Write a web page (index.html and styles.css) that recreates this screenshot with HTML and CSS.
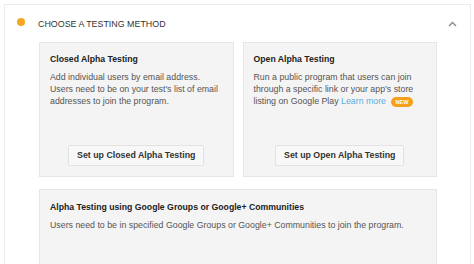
FILE: index.html
```html
<!DOCTYPE html>
<html>
<head>
<meta charset="utf-8">
<link rel="stylesheet" href="styles.css">
</head>
<body>
<section class="panel">
  <header class="panel-head">
    <span class="dot"></span>
    <h2 class="panel-title">CHOOSE A TESTING METHOD</h2>
    <svg class="chevron" width="9" height="6" viewBox="0 0 9 6"><path d="M1 5 L4.5 1.5 L8 5" fill="none" stroke="#8a8a8a" stroke-width="1.4"/></svg>
  </header>
  <div class="methods">
    <div class="row">
      <div class="card">
        <h3 class="card-title">Closed Alpha Testing</h3>
        <p class="card-text">Add individual users by email address. Users need to be on your test's list of email addresses to join the program.</p>
        <div class="card-action"><button class="btn">Set up Closed Alpha Testing</button></div>
      </div>
      <div class="card">
        <h3 class="card-title">Open Alpha Testing</h3>
        <p class="card-text">Run a public program that users can join through a specific link or your app’s store listing on Google Play <a class="link">Learn more</a><span class="badge">NEW</span></p>
        <div class="card-action"><button class="btn">Set up Open Alpha Testing</button></div>
      </div>
    </div>
    <div class="card wide">
      <h3 class="card-title">Alpha Testing using Google Groups or Google+ Communities</h3>
      <p class="card-text">Users need to be in specified Google Groups or Google+ Communities to join the program.</p>
    </div>
  </div>
</section>
</body>
</html>
```
FILE: styles.css
```css
html, body { margin: 0; padding: 0; background: #fff; }
body {
  font-family: "Liberation Sans", Arial, sans-serif;
  color: #333;
  padding: 4px 3px 0 4px;
  height: 260px;
  overflow: hidden;
}
.panel {
  border: 1px solid #ececec;
  border-bottom: none;
  height: 280px;
  box-sizing: border-box;
}
.panel-head {
  display: flex;
  align-items: center;
  height: 35px;
  padding: 1px 0 0 12px;
  box-sizing: border-box;
}
.dot {
  width: 8px;
  height: 8px;
  border-radius: 50%;
  background: #f5a623;
  margin-right: 13px;
  margin-bottom: 2px;
}
.panel-title {
  margin: 0;
  font-size: 8.9px;
  font-weight: normal;
  color: #333;
  flex: 1;
  padding-top: 2px;
}
.chevron { margin-right: 13px; margin-top: 2px; }
.methods {
  padding: 2px 33px 0 34px;
  display: flex;
  flex-direction: column;
  gap: 12px;
}
.row {
  display: grid;
  grid-template-columns: 1fr 1fr;
  gap: 9px;
}
.card {
  background: #f4f4f4;
  border: 1px solid #e6e6e6;
  padding: 10px 10px 10px 10px;
  display: flex;
  flex-direction: column;
  box-sizing: border-box;
  height: 135px;
}
.card.wide { height: 90px; padding-top: 11px; }
.card-title {
  margin: 0 0 6px 0;
  font-size: 8.7px;
  font-weight: bold;
  color: #222;
  line-height: 12px;
}
.card-text {
  margin: 0;
  font-size: 8.8px;
  line-height: 12px;
  color: #555;
}
.link { color: #5aaede; }
.badge {
  display: inline-block;
  background: #f5a01a;
  color: #fff;
  font-size: 5.5px;
  font-weight: bold;
  line-height: 6px;
  padding: 2px 0;
  width: 22px;
  text-align: center;
  border-radius: 5px;
  vertical-align: 0;
  margin-left: 5px;
}
.card-action {
  margin-top: auto;
  display: flex;
  justify-content: center;
}
.btn {
  font-family: inherit;
  font-size: 8.8px;
  font-weight: bold;
  color: #333;
  background: #f8f8f8;
  border: 1px solid #e2e2e2;
  border-radius: 2px;
  padding: 0 8px;
  height: 21px;
  line-height: 19px;
}
```
